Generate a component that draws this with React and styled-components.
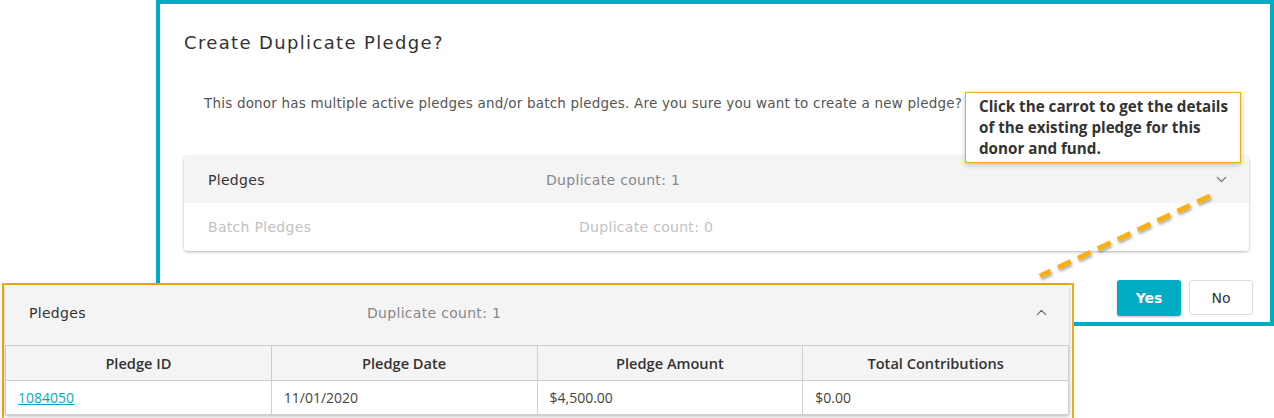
import React from 'react';
import styled, { createGlobalStyle } from 'styled-components';
import { ChevronDown, ChevronUp } from 'lucide-react';

const GlobalStyle = createGlobalStyle`
  html, body {
    margin: 0;
    padding: 0;
    background: #fff;
  }
  body {
    font-family: 'DejaVu Sans', sans-serif;
  }
`;

const teal = '#00acc1';
const amber = '#f5aa1c';

const Stage = styled.div`
  position: relative;
  width: 1274px;
  height: 418px;
  overflow: hidden;
  background: #fff;
`;

const Modal = styled.section`
  box-sizing: border-box;
  margin-left: 156px;
  width: 1118px;
  height: 326px;
  border: 4px solid ${teal};
  padding: 27px 21px 0 24px;
  display: flex;
  flex-direction: column;
`;

const Title = styled.h2`
  margin: 0;
  font-family: 'DejaVu Sans', sans-serif;
  font-weight: 400;
  font-size: 18px;
  letter-spacing: 1.35px;
  line-height: 24px;
  color: #333;
`;

const Message = styled.p`
  margin: 38px 0 0 20px;
  font-family: 'DejaVu Sans', sans-serif;
  font-size: 13.5px;
  letter-spacing: 0.2px;
  line-height: 20px;
  color: #555;
`;

const Accordion = styled.div`
  margin-top: 43px;
  border-radius: 4px;
  overflow: hidden;
  box-shadow: 0 1px 3px rgba(0, 0, 0, 0.3);
`;

const Row = styled.div`
  display: flex;
  align-items: center;
  height: ${(p) => p.$height}px;
  padding: 0 19px 0 24px;
  background: ${(p) => (p.$active ? '#f4f4f4' : '#fff')};
  font-family: 'DejaVu Sans', sans-serif;
  font-size: 14px;
  letter-spacing: 0.3px;
`;

const Label = styled.span`
  width: ${(p) => p.$width}px;
  color: ${(p) => (p.$muted ? '#c2c2c2' : '#333')};
`;

const Count = styled.span`
  flex: 1;
  color: ${(p) => (p.$muted ? '#c2c2c2' : '#888')};
`;

const Chevron = styled.span`
  display: flex;
  color: #666;
`;

const Actions = styled.div`
  display: flex;
  justify-content: flex-end;
  gap: 8px;
  margin-top: 29px;
  margin-right: -4px;
`;

const Button = styled.button`
  box-sizing: border-box;
  width: 64px;
  height: 36px;
  border-radius: 3px;
  font-family: 'DejaVu Sans', sans-serif;
  font-size: 14px;
  cursor: pointer;
`;

const PrimaryButton = styled(Button)`
  border: none;
  background: ${teal};
  color: #fff;
  font-weight: 700;
  box-shadow: 0 1px 2px rgba(0, 0, 0, 0.25);
`;

const SecondaryButton = styled(Button)`
  border: 1px solid #ddd;
  background: #fff;
  color: #333;
  height: 35px;
`;

const Callout = styled.div`
  position: absolute;
  left: 965px;
  top: 92px;
  box-sizing: border-box;
  width: 276px;
  height: 71px;
  padding: 3px 6px 0 13px;
  border: 1px solid ${amber};
  background: #fff;
  box-shadow: 0 2px 5px rgba(0, 0, 0, 0.22);
  font-family: 'Open Sans', sans-serif;
  font-weight: 700;
  font-size: 15.2px;
  line-height: 21px;
  color: #333;
  white-space: nowrap;
`;

const Connector = styled.svg`
  position: absolute;
  left: 0;
  top: 0;
  pointer-events: none;
`;

const ZoomPanel = styled.div`
  position: absolute;
  left: 2px;
  top: 283px;
  box-sizing: border-box;
  width: 1072px;
  height: 135px;
  border: 2px solid ${amber};
  border-bottom: none;
  padding: 0 3px 0 1px;
  background: #fff;
`;

const ZoomInner = styled.div`
  background: #f4f4f4;
  box-shadow: 0 1px 4px rgba(0, 0, 0, 0.3);
`;

const ZoomHeader = styled.div`
  display: flex;
  align-items: center;
  box-sizing: border-box;
  height: 60px;
  padding: 0 19px 5px 24px;
  font-family: 'DejaVu Sans', sans-serif;
  font-size: 14px;
  letter-spacing: 0.3px;
`;

const Table = styled.table`
  width: 100%;
  border-collapse: collapse;
  table-layout: fixed;
  font-family: 'Open Sans', sans-serif;
  font-size: 14px;
`;

const HeadCell = styled.th`
  height: 34px;
  padding: 0;
  border: 1px solid #cfcfcf;
  background: #f4f4f4;
  font-weight: 600;
  font-size: 14.6px;
  color: #333;
  text-align: center;
`;

const Cell = styled.td`
  height: 33px;
  padding: 0 0 0 12px;
  border: 1px solid #cfcfcf;
  background: #fff;
  color: #444;
  text-align: left;
`;

const PledgeLink = styled.a`
  color: ${teal};
  text-decoration: underline;
`;

const columns = ['Pledge ID', 'Pledge Date', 'Pledge Amount', 'Total Contributions'];

export default function App() {
  return (
    <>
      <GlobalStyle />
      <Stage>
        <Modal>
          <Title>Create Duplicate Pledge?</Title>
          <Message>
            This donor has multiple active pledges and/or batch pledges. Are you sure you want to
            create a new pledge?
          </Message>
          <Accordion>
            <Row $active $height={47}>
              <Label $width={338}>Pledges</Label>
              <Count>Duplicate count: 1</Count>
              <Chevron>
                <ChevronDown size={17} strokeWidth={1.6} />
              </Chevron>
            </Row>
            <Row $height={48}>
              <Label $width={371} $muted>
                Batch Pledges
              </Label>
              <Count $muted>Duplicate count: 0</Count>
            </Row>
          </Accordion>
          <Actions>
            <PrimaryButton>Yes</PrimaryButton>
            <SecondaryButton>No</SecondaryButton>
          </Actions>
        </Modal>

        <Callout>
          Click the carrot to get the details
          <br />
          of the existing pledge for this
          <br />
          donor and fund.
        </Callout>

        <Connector width="1274" height="418" viewBox="0 0 1274 418">
          <defs>
            <filter id="lineShadow" x="-10%" y="-10%" width="120%" height="140%">
              <feDropShadow dx="1" dy="2" stdDeviation="1.5" floodColor="#000" floodOpacity="0.35" />
            </filter>
          </defs>
          <line
            x1="1210"
            y1="196"
            x2="1040"
            y2="276"
            stroke="#f8b014"
            strokeWidth="5"
            strokeDasharray="14 8"
            filter="url(#lineShadow)"
          />
        </Connector>

        <ZoomPanel>
          <ZoomInner>
            <ZoomHeader>
              <Label $width={338}>Pledges</Label>
              <Count>Duplicate count: 1</Count>
              <Chevron>
                <ChevronUp size={17} strokeWidth={1.6} />
              </Chevron>
            </ZoomHeader>
            <Table>
              <thead>
                <tr>
                  {columns.map((c) => (
                    <HeadCell key={c}>{c}</HeadCell>
                  ))}
                </tr>
              </thead>
              <tbody>
                <tr>
                  <Cell>
                    <PledgeLink href="#">1084050</PledgeLink>
                  </Cell>
                  <Cell>11/01/2020</Cell>
                  <Cell>$4,500.00</Cell>
                  <Cell>$0.00</Cell>
                </tr>
              </tbody>
            </Table>
          </ZoomInner>
        </ZoomPanel>
      </Stage>
    </>
  );
}
